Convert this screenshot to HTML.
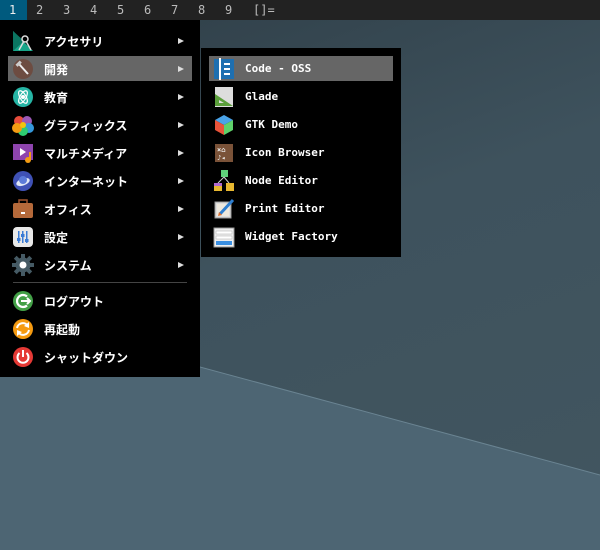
<!DOCTYPE html><html><head><style>
*{margin:0;padding:0;box-sizing:border-box}
body{width:600px;height:550px;overflow:hidden;position:relative;background:#3c505b;font-family:"Liberation Sans","Noto Sans CJK JP",sans-serif}
.bg{position:absolute;inset:0;background:linear-gradient(160deg,#2e3d46 0%,#3e525d 45%,#425660 100%)}
.bar{position:absolute;left:0;top:0;width:600px;height:20px;background:#222;font-family:"DejaVu Sans Mono","Liberation Mono",monospace;font-size:12px;color:#bbb}
.bar span{position:absolute;top:3px}
.b1{position:absolute;left:0;top:0;width:27px;height:20px;background:#005a7e}
.menu{position:absolute;background:#000}
.row{position:absolute;height:25px;color:#fff;font-size:12px;font-weight:bold}
.row .t{position:absolute;top:5px}
.row.hl{background:#666}
.arr{position:absolute;left:170px;top:10px;width:0;height:0;border-left:6px solid #ddd;border-top:3.5px solid transparent;border-bottom:3.5px solid transparent}
.ic{position:absolute;width:22px;height:22px;top:2px}
.sub .row{font-family:"DejaVu Sans Mono","Liberation Mono",monospace;font-size:11px}
.sub .row .t{top:6px}
</style></head><body>
<div class="bg"></div>
<svg style="position:absolute;left:0;top:0" width="600" height="550"><polygon points="0,313 600,475 600,550 0,550" fill="#4d6573"/><line x1="0" y1="313" x2="600" y2="475" stroke="#6a8492" stroke-width="1"/></svg>
<div class="bar"><div class="b1"></div><span style="left:9px;color:#eee">1</span><span style="left:36px">2</span><span style="left:63px">3</span><span style="left:90px">4</span><span style="left:117px">5</span><span style="left:144px">6</span><span style="left:171px">7</span><span style="left:198px">8</span><span style="left:225px">9</span><span style="left:253px">[]=</span></div>

<div class="menu" style="left:0;top:20px;width:200px;height:357px">
<div class="row" style="left:8px;top:8px;width:184px"><svg class="ic" style="left:4px" viewBox="0 0 22 22"><polygon points="1,1 1,21 21,21" fill="#17a589"/><polygon points="1,1 1,21 12,11" fill="#0b7561"/><circle cx="13" cy="9" r="3" fill="none" stroke="#ddd" stroke-width="1.5"/><line x1="12" y1="11" x2="7" y2="20" stroke="#ddd" stroke-width="1.5"/><line x1="14" y1="11" x2="19" y2="20" stroke="#ddd" stroke-width="1.5"/></svg><span class="t" style="left:36px">アクセサリ</span><span class="arr"></span></div>
<div class="row hl" style="left:8px;top:36px;width:184px"><svg class="ic" style="left:4px" viewBox="0 0 22 22"><circle cx="11" cy="11" r="10" fill="#6d4c41"/><line x1="7" y1="6" x2="16" y2="16" stroke="#eee" stroke-width="2"/><rect x="4" y="4" width="6" height="3" fill="#ccc" transform="rotate(-45 7 6)"/></svg><span class="t" style="left:36px">開発</span><span class="arr"></span></div>
<div class="row" style="left:8px;top:64px;width:184px"><svg class="ic" style="left:4px" viewBox="0 0 22 22"><circle cx="11" cy="11" r="10" fill="#26b5a5"/><ellipse cx="11" cy="11" rx="7" ry="3" fill="none" stroke="#fff" stroke-width="1.2" transform="rotate(60 11 11)"/><ellipse cx="11" cy="11" rx="7" ry="3" fill="none" stroke="#fff" stroke-width="1.2" transform="rotate(-60 11 11)"/><circle cx="11" cy="11" r="2" fill="#fff"/></svg><span class="t" style="left:36px">教育</span><span class="arr"></span></div>
<div class="row" style="left:8px;top:92px;width:184px"><svg class="ic" style="left:4px" viewBox="0 0 22 22"><circle cx="7" cy="7" r="5" fill="#e74c3c"/><circle cx="15" cy="7" r="5" fill="#9b59b6"/><circle cx="17" cy="14" r="5" fill="#3498db"/><circle cx="11" cy="17" r="5" fill="#2ecc71"/><circle cx="5" cy="14" r="5" fill="#f39c12"/><circle cx="11" cy="11" r="3" fill="#f1c40f"/></svg><span class="t" style="left:36px">グラフィックス</span><span class="arr"></span></div>
<div class="row" style="left:8px;top:120px;width:184px"><svg class="ic" style="left:4px" viewBox="0 0 22 22"><rect x="1" y="2" width="20" height="16" fill="#8e44ad"/><polygon points="8,6 8,14 14,10" fill="#fff"/><circle cx="16" cy="18" r="3" fill="#f39c12"/><rect x="17" y="10" width="2" height="8" fill="#f39c12"/></svg><span class="t" style="left:36px">マルチメディア</span><span class="arr"></span></div>
<div class="row" style="left:8px;top:148px;width:184px"><svg class="ic" style="left:4px" viewBox="0 0 22 22"><circle cx="11" cy="11" r="10" fill="#3f51b5"/><ellipse cx="11" cy="12" rx="7" ry="3.5" fill="#dfe6f5" transform="rotate(-20 11 12)"/><circle cx="11" cy="10" r="4" fill="#5c7bd9"/></svg><span class="t" style="left:36px">インターネット</span><span class="arr"></span></div>
<div class="row" style="left:8px;top:176px;width:184px"><svg class="ic" style="left:4px" viewBox="0 0 22 22"><rect x="7" y="2" width="8" height="4" fill="none" stroke="#a0522d" stroke-width="1.5"/><rect x="1" y="5" width="20" height="15" rx="2" fill="#b5693a"/><rect x="9" y="14" width="4" height="2" fill="#fff"/></svg><span class="t" style="left:36px">オフィス</span><span class="arr"></span></div>
<div class="row" style="left:8px;top:204px;width:184px"><svg class="ic" style="left:4px" viewBox="0 0 22 22"><rect x="1" y="1" width="20" height="20" rx="4" fill="#e8e8e8"/><rect x="6" y="5" width="1.5" height="12" fill="#3a7bd5"/><rect x="10" y="5" width="1.5" height="12" fill="#3a7bd5"/><rect x="14" y="5" width="1.5" height="12" fill="#3a7bd5"/><rect x="5" y="12" width="3.5" height="3" fill="#3a7bd5"/><rect x="9" y="8" width="3.5" height="3" fill="#3a7bd5"/><rect x="13" y="13" width="3.5" height="3" fill="#3a7bd5"/></svg><span class="t" style="left:36px">設定</span><span class="arr"></span></div>
<div class="row" style="left:8px;top:232px;width:184px"><svg class="ic" style="left:4px" viewBox="0 0 22 22"><circle cx="11" cy="11" r="7.5" fill="#455a64"/><g fill="#455a64"><rect x="9" y="0" width="4" height="5"/><rect x="9" y="17" width="4" height="5"/><rect x="0" y="9" width="5" height="4"/><rect x="17" y="9" width="5" height="4"/><rect x="9" y="0" width="4" height="5" transform="rotate(45 11 11)"/><rect x="9" y="17" width="4" height="5" transform="rotate(45 11 11)"/><rect x="0" y="9" width="5" height="4" transform="rotate(45 11 11)"/><rect x="17" y="9" width="5" height="4" transform="rotate(45 11 11)"/></g><circle cx="11" cy="11" r="3.5" fill="#fff"/></svg><span class="t" style="left:36px">システム</span><span class="arr"></span></div>
<div style="position:absolute;left:13px;top:262px;width:174px;height:1px;background:#444"></div>
<div class="row" style="left:8px;top:268px;width:184px"><svg class="ic" style="left:4px" viewBox="0 0 22 22"><circle cx="11" cy="11" r="10" fill="#43a047"/><path d="M15 6.5A6 6 0 1 0 15 15.5" fill="none" stroke="#fff" stroke-width="2.2"/><path d="M9 11h9M15 8l3 3-3 3" fill="none" stroke="#fff" stroke-width="2"/></svg><span class="t" style="left:36px">ログアウト</span></div>
<div class="row" style="left:8px;top:296px;width:184px"><svg class="ic" style="left:4px" viewBox="0 0 22 22"><circle cx="11" cy="11" r="10" fill="#f59a10"/><path d="M5 10A6 6 0 0 1 16 8M17 12A6 6 0 0 1 6 14" fill="none" stroke="#fff" stroke-width="2"/><polygon points="17,4 17,10 12,8" fill="#fff"/><polygon points="5,18 5,12 10,14" fill="#fff"/></svg><span class="t" style="left:36px">再起動</span></div>
<div class="row" style="left:8px;top:324px;width:184px"><svg class="ic" style="left:4px" viewBox="0 0 22 22"><circle cx="11" cy="11" r="10" fill="#e53935"/><path d="M7.5 7A5.5 5.5 0 1 0 14.5 7" fill="none" stroke="#fff" stroke-width="2"/><line x1="11" y1="4" x2="11" y2="11" stroke="#fff" stroke-width="2"/></svg><span class="t" style="left:36px">シャットダウン</span></div>
</div>

<div class="menu sub" style="left:201px;top:48px;width:200px;height:209px">
<div class="row hl" style="left:8px;top:8px;width:184px"><svg class="ic" style="left:4px" viewBox="0 0 22 22"><rect x="1" y="1" width="20" height="20" fill="#1e6fb0"/><rect x="6" y="0" width="2" height="22" fill="#fff"/><rect x="11" y="5" width="6" height="2" fill="#fff"/><rect x="11" y="10" width="6" height="2" fill="#fff"/><rect x="11" y="15" width="6" height="2" fill="#fff"/></svg><span class="t" style="left:36px">Code - OSS</span></div>
<div class="row" style="left:8px;top:36px;width:184px"><svg class="ic" style="left:4px" viewBox="0 0 22 22"><rect x="2" y="1" width="18" height="20" fill="#ddd"/><polygon points="2,8 2,20 20,20" fill="#5a9e3a"/><polygon points="6,14 6,17 11,17" fill="#ddd"/></svg><span class="t" style="left:36px">Glade</span></div>
<div class="row" style="left:8px;top:64px;width:184px"><svg class="ic" style="left:4px" viewBox="0 0 22 22"><polygon points="11,1 20,6 11,11 2,6" fill="#4aa3e8"/><polygon points="2,6 11,11 11,21 2,16" fill="#e8533a"/><polygon points="20,6 11,11 11,21 20,16" fill="#5fd16a"/></svg><span class="t" style="left:36px">GTK Demo</span></div>
<div class="row" style="left:8px;top:92px;width:184px"><svg class="ic" style="left:4px" viewBox="0 0 22 22"><rect x="2" y="2" width="18" height="18" fill="#7a5238"/><text x="4" y="10" font-size="7" fill="#eee">×⌂</text><text x="4" y="18" font-size="7" fill="#eee">♪◂</text></svg><span class="t" style="left:36px">Icon Browser</span></div>
<div class="row" style="left:8px;top:120px;width:184px"><svg class="ic" style="left:4px" viewBox="0 0 22 22"><rect x="8" y="0" width="7" height="7" fill="#5fd17a"/><line x1="11" y1="7" x2="5" y2="13" stroke="#ccc"/><line x1="11" y1="7" x2="16" y2="13" stroke="#ccc"/><rect x="1" y="13" width="8" height="8" fill="#e8b830"/><rect x="13" y="13" width="8" height="8" fill="#e8b830"/><rect x="1" y="13" width="8" height="3" fill="#b06ad0"/></svg><span class="t" style="left:36px">Node Editor</span></div>
<div class="row" style="left:8px;top:148px;width:184px"><svg class="ic" style="left:4px" viewBox="0 0 22 22"><rect x="2" y="4" width="16" height="16" fill="#ddd" stroke="#999"/><rect x="4" y="6" width="12" height="12" fill="#eee8dd"/><line x1="7" y1="16" x2="20" y2="2" stroke="#2f7fd0" stroke-width="3"/><polygon points="5,18 6,14 9,17" fill="#e07030"/></svg><span class="t" style="left:36px">Print Editor</span></div>
<div class="row" style="left:8px;top:176px;width:184px"><svg class="ic" style="left:4px" viewBox="0 0 22 22"><rect x="1" y="2" width="20" height="19" fill="#eee" stroke="#999"/><rect x="3" y="5" width="16" height="3" fill="#fff" stroke="#aaa" stroke-width=".5"/><rect x="3" y="10" width="16" height="3" fill="#fff" stroke="#aaa" stroke-width=".5"/><rect x="3" y="15" width="16" height="4" fill="#3a8ee0"/></svg><span class="t" style="left:36px">Widget Factory</span></div>
</div>
</body></html>
